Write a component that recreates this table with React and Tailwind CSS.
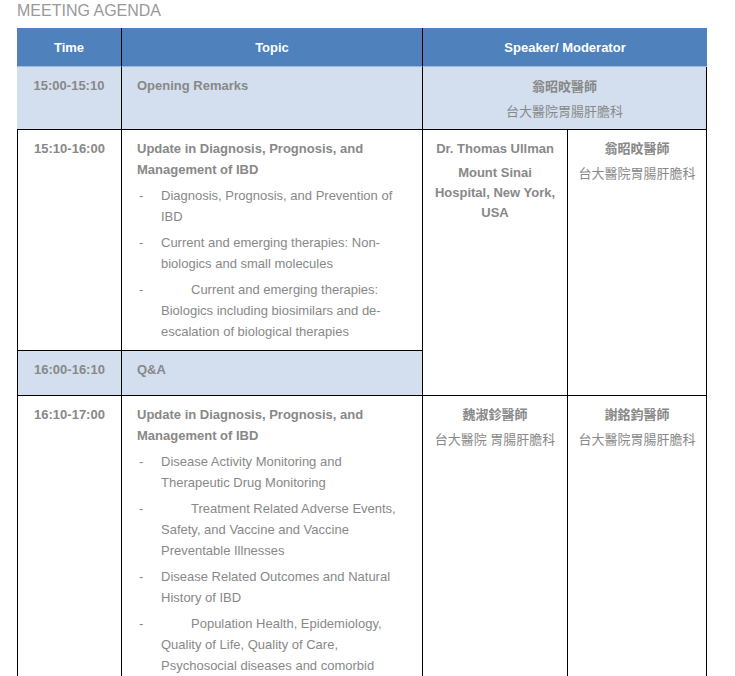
import React from "react";

const font = { fontFamily: '"Liberation Sans", Arial, "Noto Sans CJK TC", sans-serif' };

const Item = ({ text, indent }) => (
  <div className="mt-[5px] flex">
    <span className="w-[24px] shrink-0 pl-[2px]">-</span>
    <span className={indent ? "indent-[30px]" : ""}>{text}</span>
  </div>
);

const Speaker = ({ name, dept }) => (
  <div className="text-center">
    <div className="font-bold">{name}</div>
    <div className="mt-[4px]">{dept}</div>
  </div>
);

const session1 = [
  { text: "Diagnosis, Prognosis, and Prevention of IBD" },
  { text: "Current and emerging therapies: Non-biologics and small molecules" },
  {
    text: "Current and emerging therapies: Biologics including biosimilars and de-escalation of biological therapies",
    indent: true,
  },
];

const session2 = [
  { text: "Disease Activity Monitoring and Therapeutic Drug Monitoring" },
  {
    text: "Treatment Related Adverse Events, Safety, and Vaccine and Vaccine Preventable Illnesses",
    indent: true,
  },
  { text: "Disease Related Outcomes and Natural History of IBD" },
  {
    text: "Population Health, Epidemiology, Quality of Life, Quality of Care, Psychosocial diseases and comorbid conditions",
    indent: true,
  },
];

export default function App() {
  return (
    <div className="min-h-screen bg-white pl-[17px] text-[13px] leading-[21px] text-[#888888]" style={font}>
      <h1 className="mb-[7px] pt-[1px] text-[16px] leading-[20px] font-normal text-[#999999]">
        MEETING AGENDA
      </h1>

      <table className="w-[690px] table-fixed border-separate border-spacing-0">
        <colgroup>
          <col className="w-[105px]" />
          <col className="w-[301px]" />
          <col className="w-[145px]" />
          <col className="w-[139px]" />
        </colgroup>
        <thead>
          <tr className="bg-[#4f81bd] text-white">
            <th className="h-[39px] border-r border-b border-r-black border-b-[#9db8db] align-middle font-bold">
              Time
            </th>
            <th className="border-r border-b border-r-black border-b-[#9db8db] align-middle font-bold">
              Topic
            </th>
            <th colSpan={2} className="border-b border-b-[#9db8db] align-middle font-bold">
              Speaker/ Moderator
            </th>
          </tr>
        </thead>
        <tbody>
          <tr className="bg-[#d3dfee]">
            <td className="h-[63px] border-r border-b border-black px-2 pt-[8px] text-center align-top font-bold">
              15:00-15:10
            </td>
            <td className="border-r border-b border-black pr-4 pl-[15px] pt-[8px] align-top font-bold">
              Opening Remarks
            </td>
            <td colSpan={2} className="border-r border-b border-black px-2 pt-[9px] align-top">
              <Speaker name="翁昭旼醫師" dept="台大醫院胃腸肝膽科" />
            </td>
          </tr>

          <tr>
            <td className="h-[221px] border-r border-b border-l border-black px-2 pt-[8px] text-center align-top font-bold">
              15:10-16:00
            </td>
            <td className="border-r border-b border-black pr-4 pl-[15px] pt-[8px] align-top">
              <div className="font-bold">
                Update in Diagnosis, Prognosis, and Management of IBD
              </div>
              {session1.map((it, i) => (
                <Item key={i} {...it} />
              ))}
            </td>
            <td
              rowSpan={2}
              className="border-r border-b border-black px-2 pt-[8px] text-center align-top font-bold"
            >
              <div>Dr. Thomas Ullman</div>
              <div className="mt-[4px] leading-[20px]">
                Mount Sinai Hospital, New York, USA
              </div>
            </td>
            <td
              rowSpan={2}
              className="border-r border-b border-black px-2 pt-[8px] align-top"
            >
              <Speaker name="翁昭旼醫師" dept="台大醫院胃腸肝膽科" />
            </td>
          </tr>

          <tr className="bg-[#d3dfee]">
            <td className="h-[45px] border-r border-b border-l border-black px-2 pt-[8px] text-center align-top font-bold">
              16:00-16:10
            </td>
            <td className="border-r border-b border-black pr-4 pl-[15px] pt-[8px] align-top font-bold">
              Q&amp;A
            </td>
          </tr>

          <tr>
            <td className="border-r border-b border-l border-black px-2 pt-[8px] text-center align-top font-bold">
              16:10-17:00
            </td>
            <td className="border-r border-b border-black pr-4 pl-[15px] pt-[8px] pb-[8px] align-top">
              <div className="font-bold">
                Update in Diagnosis, Prognosis, and Management of IBD
              </div>
              {session2.map((it, i) => (
                <Item key={i} {...it} />
              ))}
            </td>
            <td className="border-r border-b border-black px-1 pt-[8px] align-top">
              <Speaker name="魏淑鉁醫師" dept="台大醫院 胃腸肝膽科" />
            </td>
            <td className="border-r border-b border-black px-1 pt-[8px] align-top">
              <Speaker name="謝銘鈞醫師" dept="台大醫院胃腸肝膽科" />
            </td>
          </tr>
        </tbody>
      </table>
    </div>
  );
}
